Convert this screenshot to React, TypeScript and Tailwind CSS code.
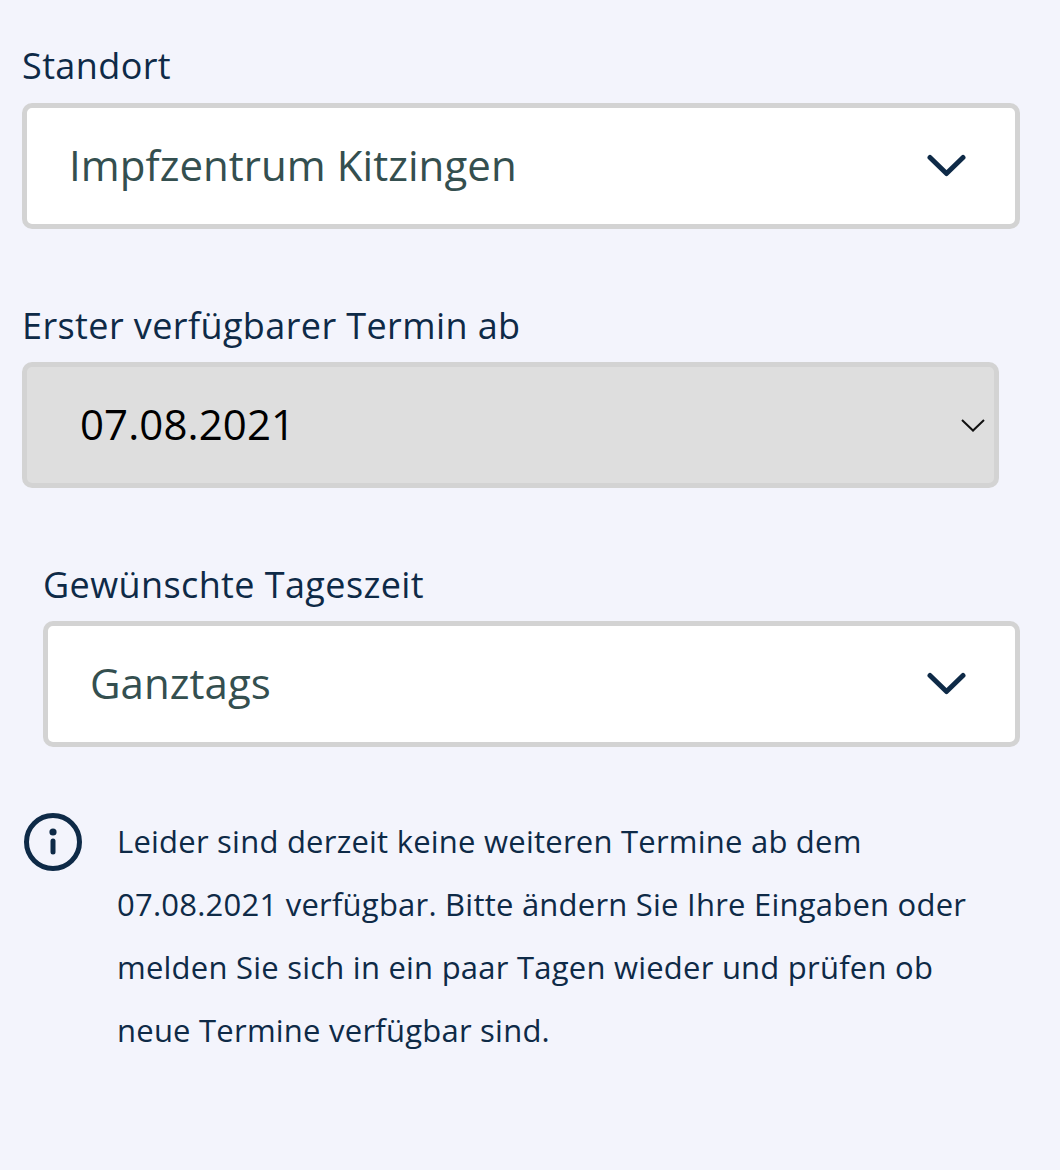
const FONT = "font-['Open_Sans','Noto_Sans',sans-serif]"

function Chevron() {
  return (
    <svg width="40" height="26" viewBox="0 0 40 26" fill="none" className="shrink-0" aria-hidden>
      <path d="M4 4.5 L20.5 20.5 L37 4.5" stroke="#0e2a47" strokeWidth="5" strokeLinecap="round" strokeLinejoin="round" />
    </svg>
  )
}

function SelectBox({ value }: { value: string }) {
  return (
    <div className="h-[126px] flex items-center justify-between pl-[42px] pr-[49px] bg-white border-[5px] border-[#d3d3d3] rounded-[10px]">
      <span className="text-[42px] tracking-[0.05px] leading-none -mt-[2px] text-[#344f4f]">{value}</span>
      <Chevron />
    </div>
  )
}

export default function App() {
  return (
    <div className={`${FONT} w-[1060px] h-[1170px] bg-[#f3f4fc] pt-[41px] pl-[22px] pr-[40px] text-[#0e2a47]`}>
      <label className="block text-[36px] tracking-[0.4px] leading-[50px] h-[62px]">Standort</label>
      <SelectBox value="Impfzentrum Kitzingen" />

      <label className="block mt-[72px] text-[36px] tracking-[0.4px] leading-[50px] h-[61px]">Erster verfügbarer Termin ab</label>
      <div className="w-[977px] h-[126px] flex items-center justify-between pl-[53px] pr-[9px] bg-[#dedede] border-[5px] border-[#d3d3d3] rounded-[10px]">
        <span className="text-[42px] tracking-[0.1px] leading-none -mt-[2px] text-black">07.08.2021</span>
        <svg width="24" height="14" viewBox="0 0 24 14" fill="none" aria-hidden>
          <path d="M1 2 L12 12.5 L23 2" stroke="#111" strokeWidth="2" />
        </svg>
      </div>

      <div className="ml-[21px]">
        <label className="block mt-[72px] text-[36px] tracking-[0.4px] leading-[50px] h-[61px]">Gewünschte Tageszeit</label>
        <SelectBox value="Ganztags" />
      </div>

      <div className="flex mt-[64px]">
        <svg width="62" height="62" viewBox="0 0 62 62" fill="none" className="shrink-0" aria-hidden>
          <circle cx="31" cy="31" r="26.5" stroke="#0e2a47" strokeWidth="5" />
          <circle cx="31" cy="21" r="3.6" fill="#0e2a47" />
          <path d="M31 30 V41" stroke="#0e2a47" strokeWidth="5" strokeLinecap="round" />
        </svg>
        <p className="ml-[33px] w-[880px] text-[31px] tracking-[0.23px] leading-[63px] -mt-[1px]">
          Leider sind derzeit keine weiteren Termine ab dem 07.08.2021 verfügbar. Bitte ändern Sie Ihre Eingaben oder melden Sie sich in ein paar Tagen wieder und prüfen ob neue Termine verfügbar sind.
        </p>
      </div>
    </div>
  )
}
